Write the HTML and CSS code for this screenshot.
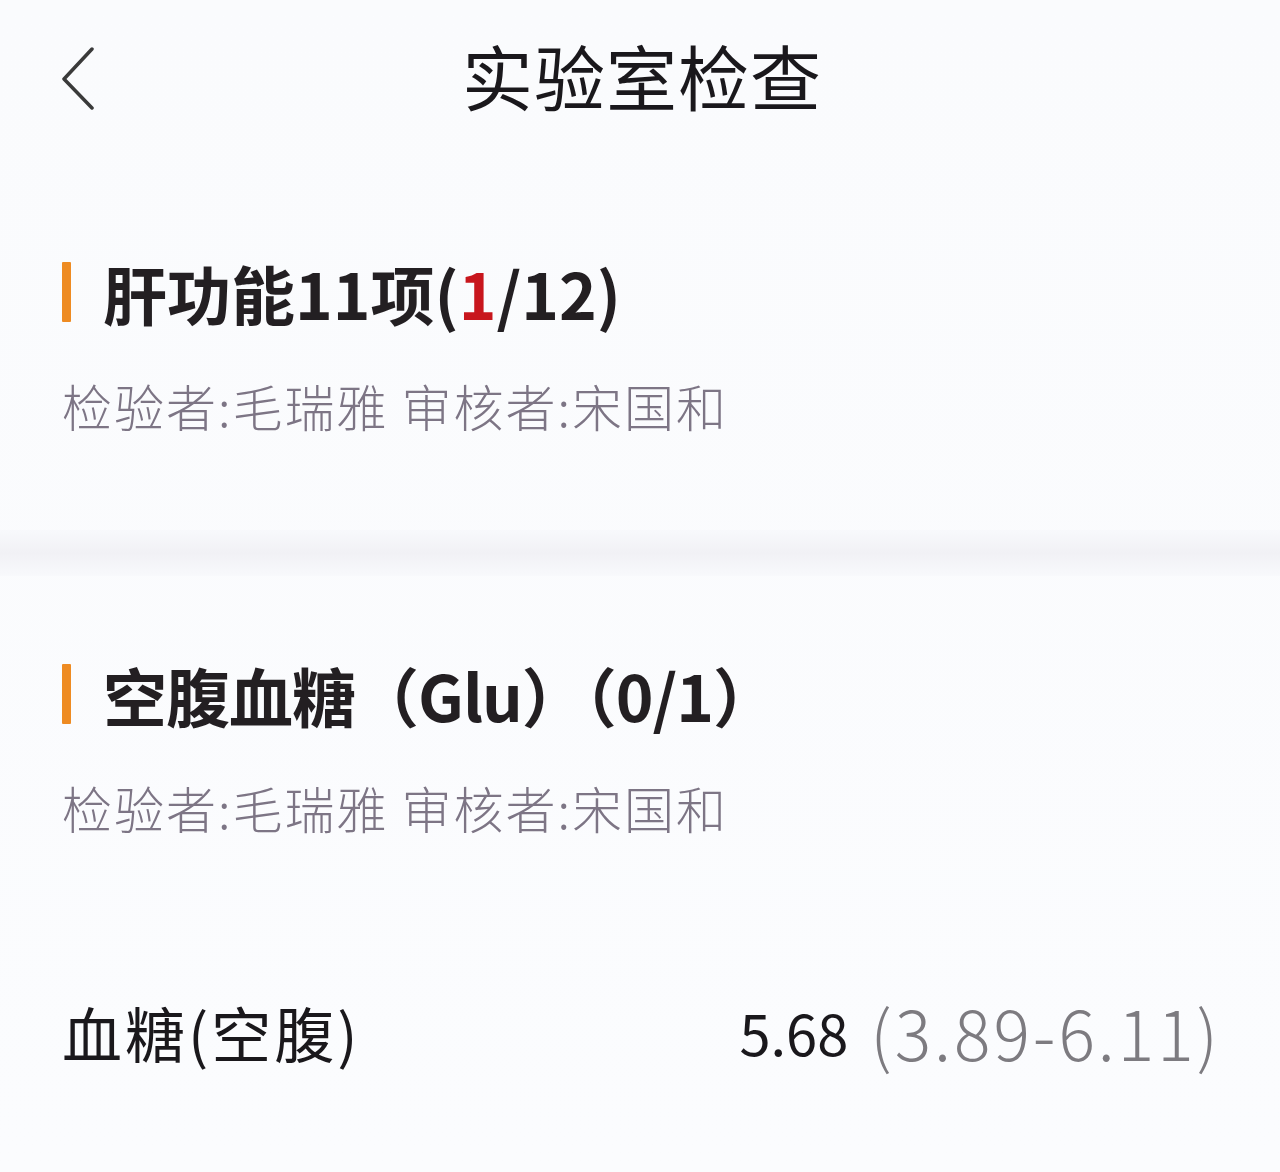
FILE: index.html
```html
<!DOCTYPE html>
<html lang="zh-CN">
<head>
<meta charset="utf-8">
<title>实验室检查</title>
<link rel="stylesheet" href="styles.css">
</head>
<body>
<div class="page">
  <header class="topbar">
    <div class="back">
      <svg width="40" height="64" viewBox="0 0 40 64"><path d="M34 3 L6 33 L34 62" fill="none" stroke="#3a3a3a" stroke-width="3.5" stroke-linecap="round" stroke-linejoin="round"/></svg>
    </div>
    <h1 class="title">实验室检查</h1>
    <div class="spacer"></div>
  </header>

  <section class="group first">
    <div class="group-head">
      <span class="bar"></span>
      <h2 class="group-title">肝功能11项(<span class="red">1</span>/12)</h2>
    </div>
    <p class="people">检验者:毛瑞雅 审核者:宋国和</p>
  </section>

  <div class="band"></div>

  <section class="group second">
    <div class="group-head">
      <span class="bar"></span>
      <h2 class="group-title narrow">空腹血糖（Glu）（0/1）</h2>
    </div>
    <p class="people">检验者:毛瑞雅 审核者:宋国和</p>
    <div class="item">
      <span class="item-name">血糖(空腹)</span>
      <span class="item-value"><span class="val">5.68</span> <span class="range">(3.89-6.11)</span></span>
    </div>
  </section>
</div>
</body>
</html>
```

FILE: styles.css
```css
html, body {
  margin: 0;
  padding: 0;
  background: #fafbfd;
}
body {
  font-family: "Noto Sans CJK SC", "Noto Sans", sans-serif;
  color: #1c1a1e;
}
.page {
  width: 1280px;
  height: 1172px;
  overflow: hidden;
  background: linear-gradient(#fafbfd, #fbfcfe);
}
.topbar {
  height: 165px;
  display: grid;
  grid-template-columns: 1fr auto 1fr;
  align-items: center;
  padding: 0 0 0 58px;
  box-sizing: border-box;
}
.back {
  display: flex;
  align-items: center;
  height: 64px;
  margin-top: -10px;
}
.title {
  margin: 0;
  font-size: 71px;
  font-weight: 400;
  letter-spacing: 1px;
  color: #1a181c;
  line-height: 1;
  margin-top: -16px;
  transform: translateX(-27px);
}
.group {
  padding: 0 62px;
}
.group.first {
  padding-top: 95px;
  height: 365px;
  box-sizing: border-box;
}
.band {
  height: 46px;
  background: linear-gradient(#f8f9fc, #f1f1f5 50%, #f8f9fc);
}
.group.second {
  padding-top: 86px;
}
.group-head {
  display: flex;
  align-items: center;
  height: 64px;
}
.bar {
  width: 9px;
  height: 60px;
  background: #ee8b22;
  border-radius: 1px;
  margin-right: 32px;
}
.group-title {
  margin: 0;
  font-size: 64px;
  font-weight: 700;
  line-height: 1;
  color: #231f22;
}
.group-title.narrow {
  letter-spacing: -1px;
}
.red {
  color: #c8161d;
}
.people {
  margin: 56px 0 0 0;
  font-size: 50px;
  line-height: 1;
  color: #7d7585;
  font-weight: 300;
  letter-spacing: 2px;
}
.item {
  margin-top: 166px;
  display: flex;
  justify-content: space-between;
  align-items: center;
}
.item-name {
  font-size: 60px;
  color: #1a181c;
  line-height: 1;
  letter-spacing: 3px;
}
.item-value {
  display: flex;
  align-items: center;
  gap: 22px;
  line-height: 1;
}
.val {
  font-size: 56px;
  color: #1a181c;
}
.range {
  font-size: 68px;
  color: #7d7b80;
  font-weight: 300;
  letter-spacing: 3px;
  margin-right: -3px;
}
```
